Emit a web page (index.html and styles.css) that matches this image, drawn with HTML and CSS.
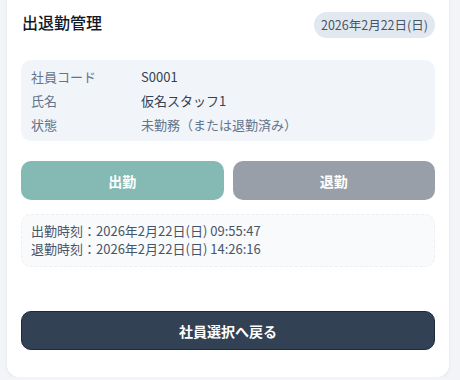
FILE: index.html
```html
<!DOCTYPE html>
<html lang="ja">
<head>
    <meta charset="UTF-8">
    <meta name="viewport" content="width=device-width, initial-scale=1.0">
    <title>出退勤管理</title>
    <link rel="stylesheet" href="styles.css">
</head>
<body>
    <div class="card">
        <div class="card-header">
            <h1 class="title">出退勤管理</h1>
            <span class="date-badge">2026年2月22日(日)</span>
        </div>

        <div class="info-box">
            <div class="info-row">
                <span class="info-label">社員コード</span>
                <span class="info-value">S0001</span>
            </div>
            <div class="info-row">
                <span class="info-label">氏名</span>
                <span class="info-value">仮名スタッフ1</span>
            </div>
            <div class="info-row">
                <span class="info-label">状態</span>
                <span class="info-value muted">未勤務（または退勤済み）</span>
            </div>
        </div>

        <div class="actions">
            <button class="btn btn-in" disabled>出勤</button>
            <button class="btn btn-out" disabled>退勤</button>
        </div>

        <div class="log-box">
            <div>出勤時刻：2026年2月22日(日) 09:55:47</div>
            <div>退勤時刻：2026年2月22日(日) 14:26:16</div>
        </div>

        <button class="btn btn-back">社員選択へ戻る</button>
    </div>
</body>
</html>
```

FILE: styles.css
```css
* {
    margin: 0;
    padding: 0;
    box-sizing: border-box;
    font-family: "Noto Sans CJK JP", "Noto Sans", sans-serif;
}

body {
    background: #f3f4f7;
}

/* Card */
.card {
    background: white;
    margin: -12px 11px 0 7px;
    padding: 24px 14px 27px;
    border-radius: 12px;
    box-shadow: 0 1px 4px rgba(15, 23, 42, 0.06);
}

.card-header {
    display: flex;
    justify-content: space-between;
    align-items: flex-start;
}

.title {
    font-size: 16px;
    line-height: 20px;
    font-weight: 500;
    color: #111827;
    padding-left: 1px;
}

.date-badge {
    background: #e2e8f0;
    color: #475569;
    font-size: 12.5px;
    height: 26px;
    line-height: 26px;
    padding: 0 7px;
    border-radius: 13px;
}

/* Employee info */
.info-box {
    margin-top: 22px;
    background: #f1f5f9;
    border-radius: 10px;
    padding: 5px 10px 4px;
}

.info-row {
    display: flex;
    font-size: 13px;
    line-height: 24px;
}

.info-label {
    width: 110px;
    color: #64748b;
}

.info-value {
    color: #334155;
}

.info-value.muted {
    color: #64748b;
}

/* Buttons */
.actions {
    display: flex;
    gap: 9px;
    margin-top: 20px;
}

.btn {
    flex: 1;
    height: 39px;
    border: none;
    border-radius: 10px;
    color: white;
    font-size: 14px;
    font-weight: 700;
}

.btn-in {
    background: #84b9b4;
}

.btn-out {
    background: #999fa9;
}

/* Time log */
.log-box {
    margin-top: 14px;
    background: #f8fafc;
    border: 1px dashed #eceef1;
    border-radius: 10px;
    padding: 7px 9px 8px;
    font-size: 13px;
    line-height: 18px;
    color: #475569;
}

.btn-back {
    display: block;
    width: 100%;
    margin-top: 44px;
    background: #334155;
    border: 1px solid #1e293b;
}
```
